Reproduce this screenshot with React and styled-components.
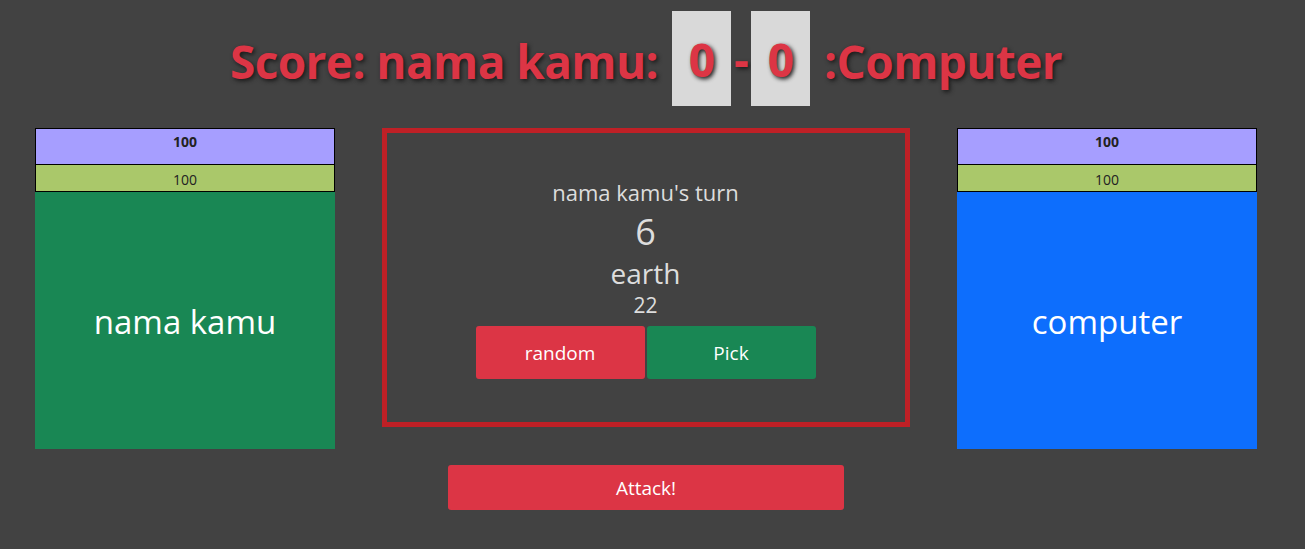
import React, { useState } from 'react'
import styled, { createGlobalStyle } from 'styled-components'

const Global = createGlobalStyle`
    body {
        margin: 0;
        background: #424242;
        font-family: "Open Sans", "Noto Sans", sans-serif;
    }
`

const Page = styled.div`
    width: 1292px;
    min-height: 549px;
    background: #424242;
`

const Header = styled.h1`
    margin: 0;
    padding-top: 11px;
    display: flex;
    justify-content: center;
    align-items: center;
    font-size: 46px;
    font-weight: 700;
    color: #dc3545;
    text-shadow: 2px 2px 4px #1a1a1a;
    letter-spacing: -0.6px;
`

const Label = styled.span`
    position: relative;
    top: 2px;
`

const ScoreBox = styled.span`
    display: flex;
    align-items: center;
    justify-content: center;
    width: 59px;
    height: 95px;
    background: #d9d9d9;
    margin: ${props => props.side === 'left' ? '0 0 0 14px' : '0 14px 0 0'};
`

const Dash = styled.span`
    width: 20px;
    text-align: center;
`

const Arena = styled.div`
    display: grid;
    grid-template-columns: 300px 527px 300px;
    column-gap: 47.5px;
    justify-content: center;
    align-items: start;
    margin-top: 22px;
`

const Card = styled.div`
    display: flex;
    flex-direction: column;
    height: 321px;
`

const HpBar = styled.div`
    height: 37px;
    box-sizing: border-box;
    background: #a69eff;
    border: 1px solid #000;
    text-align: center;
    font-weight: 700;
    font-size: 14px;
    color: #222;
    padding-top: 3px;
`

const ManaBar = styled.div`
    height: 27px;
    box-sizing: border-box;
    background: #aac86a;
    border: 1px solid #000;
    border-top: none;
    text-align: center;
    font-size: 14px;
    color: #222;
    line-height: 26px;
    padding-top: 2px;
`

const Fighter = styled.div`
    flex: 1;
    display: flex;
    align-items: center;
    justify-content: center;
    background: ${props => props.color};
    color: #fff;
    font-size: 33px;
    padding-top: 2px;
`

const Board = styled.div`
    height: 299px;
    box-sizing: border-box;
    border: 5px solid #bf2026;
    display: flex;
    flex-direction: column;
    align-items: center;
    justify-content: center;
    color: #ddd;
    padding-top: 1px;
    margin-left: -1px;
`

const Turn = styled.div`
    font-size: 22px;
    line-height: 30px;
    margin-bottom: 2px;
`

const Dice = styled.div`
    font-size: 36px;
    line-height: 46px;
`

const Element = styled.div`
    font-size: 28px;
    line-height: 36px;
`

const Power = styled.div`
    font-size: 21px;
    line-height: 28px;
`

const ButtonRow = styled.div`
    display: flex;
    gap: 2px;
    margin-top: 7px;
`

const Button = styled.button`
    border: none;
    border-radius: 3px;
    color: #fff;
    font-family: "Open Sans", sans-serif;
    font-size: 19px;
    background: ${props => props.variant === 'green' ? '#198754' : '#dc3545'};
    width: ${props => props.wide ? '396px' : '169px'};
    height: ${props => props.wide ? '45px' : '53px'};
    cursor: pointer;
`

const Footer = styled.div`
    display: flex;
    justify-content: center;
    margin-top: 16px;
`

const App = () => {
    const [turn] = useState({ dice: 6, element: 'earth', power: 22 })

    return (
        <Page>
            <Global />
            <Header>
                <Label>Score: nama kamu:</Label>
                <ScoreBox side="left">0</ScoreBox>
                <Dash>-</Dash>
                <ScoreBox side="right">0</ScoreBox>
                <Label>:Computer</Label>
            </Header>
            <Arena>
                <Card>
                    <HpBar>100</HpBar>
                    <ManaBar>100</ManaBar>
                    <Fighter color="#198754">nama kamu</Fighter>
                </Card>
                <Board>
                    <Turn>nama kamu's turn</Turn>
                    <Dice>{turn.dice}</Dice>
                    <Element>{turn.element}</Element>
                    <Power>{turn.power}</Power>
                    <ButtonRow>
                        <Button>random</Button>
                        <Button variant="green">Pick</Button>
                    </ButtonRow>
                </Board>
                <Card>
                    <HpBar>100</HpBar>
                    <ManaBar>100</ManaBar>
                    <Fighter color="#0d6efd">computer</Fighter>
                </Card>
            </Arena>
            <Footer>
                <Button wide>Attack!</Button>
            </Footer>
        </Page>
    )
}

export default App
